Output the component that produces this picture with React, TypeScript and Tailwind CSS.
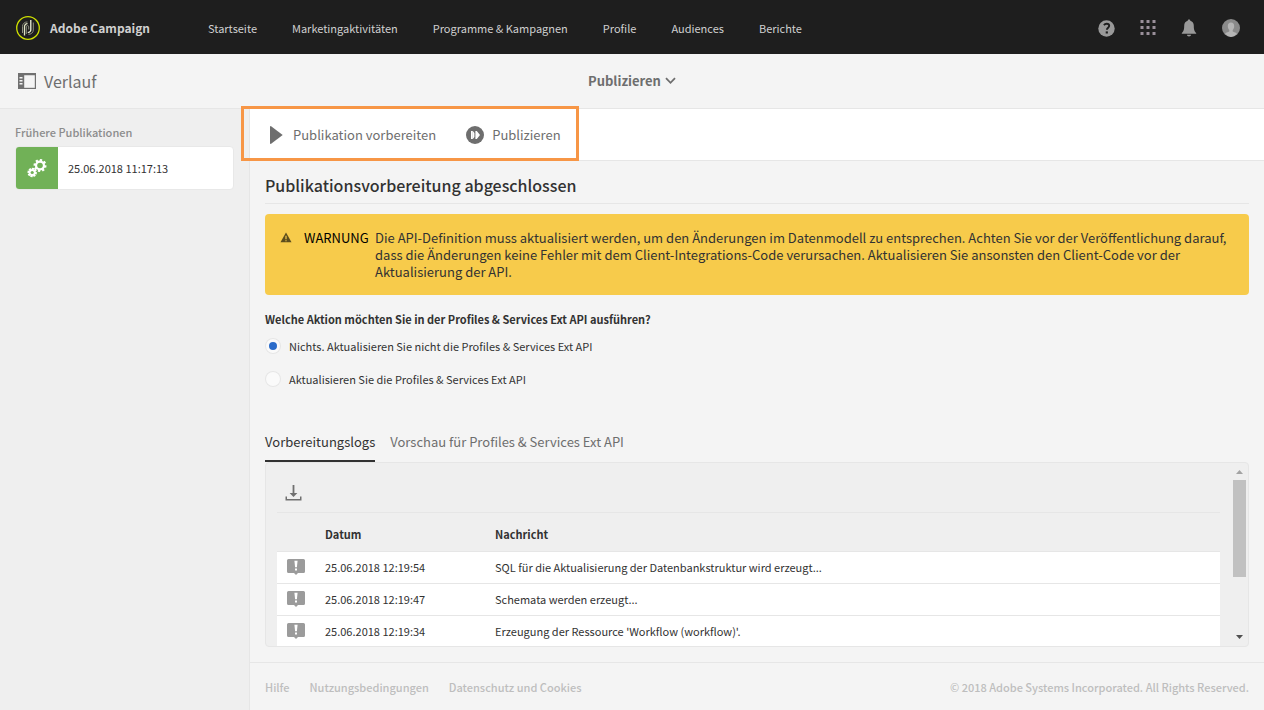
import { useState } from "react";

type LogEntry = { date: string; message: string };

const NAV_ITEMS = [
  "Startseite",
  "Marketingaktivitäten",
  "Programme & Kampagnen",
  "Profile",
  "Audiences",
  "Berichte",
];

const LOGS: LogEntry[] = [
  { date: "25.06.2018 12:19:54", message: "SQL für die Aktualisierung der Datenbankstruktur wird erzeugt..." },
  { date: "25.06.2018 12:19:47", message: "Schemata werden erzeugt..." },
  { date: "25.06.2018 12:19:34", message: "Erzeugung der Ressource 'Workflow (workflow)'." },
];

const ACTIONS = [
  { id: "none", label: "Nichts. Aktualisieren Sie nicht die Profiles & Services Ext API" },
  { id: "update", label: "Aktualisieren Sie die Profiles & Services Ext API" },
];

const TABS = ["Vorbereitungslogs", "Vorschau für Profiles & Services Ext API"];

const FOOTER_LINKS = ["Hilfe", "Nutzungsbedingungen", "Datenschutz und Cookies"];

function Logo() {
  return (
    <svg width="24" height="24" viewBox="0 0 24 24" fill="none">
      <circle cx="12" cy="12" r="11.3" stroke="#cfe000" strokeWidth="1.3" />
      <g strokeWidth="1">
        <path d="M6.5 17V10.5a4.5 4.5 0 0 1 5-4.500" stroke="#8d8f80" />
        <path d="M8.5 19.500V10.500a2.800 2.800 0 0 1 3-2.800" stroke="#dfe3c4" strokeWidth="1.300" />
        <path d="M10.300 18v-7.200a1.200 1.200 0 0 1 2.400 0V13.500" stroke="#8d8f80" />
        <path d="M14.800 4v9.500a2.600 2.600 0 0 1-3 2.800" stroke="#f0f3dc" strokeWidth="1.300" />
        <path d="M17.300 6.500v7.500a4.300 4.300 0 0 1-5 4.200" stroke="#8d8f80" />
      </g>
    </svg>
  );
}

function HelpIcon() {
  return (
    <svg width="17" height="17" viewBox="0 0 17 17">
      <circle cx="8.5" cy="8.5" r="8.2" fill="#999" />
      <path
        d="M5.9 5.1c.7-.9 1.700-1.300 2.800-1.300 1.500 0 2.500.8 2.500 2 0 1.900-2.300 1.900-2.300 4"
        fill="none"
        stroke="#1e1e1e"
        strokeWidth="1.9"
      />
      <rect x="7.7" y="11.4" width="2.2" height="2.1" fill="#1e1e1e" />
    </svg>
  );
}

function AppsIcon() {
  return (
    <svg width="16" height="16" viewBox="0 0 16 16" fill="#9a8f9a">
      {[0, 6, 12].map((y) =>
        [0, 6, 12].map((x) => <rect key={`${x}-${y}`} x={x + 0.5} y={y} width="3" height="3" />),
      )}
    </svg>
  );
}

function BellIcon() {
  return (
    <svg width="16" height="18" viewBox="0 0 16 18" fill="#999">
      <path d="M8 .5c.8 0 1.300.5 1.300 1.200 2.300.6 3.500 2.500 3.500 5 0 4.300.7 5.600 2.400 7.300v.8H.8V14c1.700-1.700 2.400-3 2.400-7.300 0-2.500 1.200-4.400 3.500-5C6.700 1 7.200.5 8 .5z" />
      <path d="M5.9 15.800h4.200c-.2 1-1 1.600-2.100 1.600s-1.900-.6-2.100-1.600z" />
    </svg>
  );
}

function AvatarIcon() {
  return (
    <svg width="18" height="18" viewBox="0 0 18 18">
      <circle cx="9" cy="9" r="9" fill="#8a8a8a" />
      <path
        d="M9 3.500c2 0 3.200 1.400 3.200 3.500 0 1.700-.6 3.200-1.500 4v1.300c0 .6 3.300 1 4.200 2.400A9 9 0 0 1 9 18a9 9 0 0 1-5.900-3.300c.9-1.400 4.200-1.800 4.200-2.400V11c-.9-.8-1.500-2.300-1.500-4 0-2.100 1.200-3.500 3.200-3.500z"
        fill="#b5b5b5"
      />
    </svg>
  );
}

function RailIcon() {
  return (
    <svg width="18" height="16" viewBox="0 0 18 16">
      <rect x=".6" y=".6" width="16.8" height="14.8" fill="none" stroke="#707070" strokeWidth="1.2" />
      <path d="M0 0h18v2.200H0zM0 2h6.200v14H0z" fill="#707070" />
      <path d="M1.5 4h3v1.500h-3zM1.500 7h3v1.500h-3zM1.500 10h3v1.500h-3z" fill="#f4f4f4" />
    </svg>
  );
}

function Gear({ cx, cy, r, hole }: { cx: number; cy: number; r: number; hole: number }) {
  return (
    <g transform={`translate(${cx} ${cy})`} fill="#fff">
      {[0, 45, 90, 135].map((angle) => (
        <rect key={angle} x="-1.2" y={-r} width="2.4" height={r * 2} transform={`rotate(${angle + 10})`} />
      ))}
      <circle r={r - 1.4} />
      <circle r={hole} fill="#71b157" />
    </g>
  );
}

function GearsIcon() {
  return (
    <svg width="20" height="20" viewBox="0 0 20 20">
      <Gear cx={13} cy={7.5} r={6.5} hole={2.8} />
      <Gear cx={5.2} cy={14.5} r={4.7} hole={1.6} />
    </svg>
  );
}

function PlayIcon() {
  return (
    <svg width="13" height="18" viewBox="0 0 13 18" fill="#6e6e6e">
      <path d="M.8 0 12.700 9 .8 18q-.8 0-.8-.8V.8Q0 0 .8 0z" />
    </svg>
  );
}

function PublishIcon() {
  return (
    <svg width="18" height="18" viewBox="0 0 18 18">
      <circle cx="9" cy="9" r="9" fill="#6e6e6e" />
      <path d="M5 5h1.800v8H5zM9.400 5h1.400l3.200 4-3.200 4H9.400z" fill="#fff" />
      <path d="M6.800 5 8.400 7v4l-1.600 2z" fill="#fff" />
    </svg>
  );
}

function ChevronIcon() {
  return (
    <svg width="11" height="8" viewBox="0 0 11 8" fill="none">
      <path d="M1 1.200 5.500 5.800 10 1.200" stroke="#6e6e6e" strokeWidth="1.8" />
    </svg>
  );
}

function WarningIcon() {
  return (
    <svg width="12" height="11" viewBox="0 0 12 11">
      <path d="M6 .5 11.500 10.300H.5z" fill="#5c4d1d" />
      <path d="M5.400 3.800h1.200v3.500H5.400zM5.400 8.200h1.200v1.100H5.400z" fill="#f7cb4b" />
    </svg>
  );
}

function DownloadIcon() {
  return (
    <svg width="17" height="17" viewBox="0 0 17 17" fill="#707070">
      <path d="M7.600 0h1.800v8h3L8.500 12 4.600 8h3z" />
      <path d="M.5 11.500H2V14h13v-2.500h1.500v4H.5z" />
    </svg>
  );
}

function LogIcon() {
  return (
    <svg width="18" height="16" viewBox="0 0 18 16">
      <path d="M1.500 0h15Q18 0 18 1.500v11q0 1.500-1.500 1.500H11l-2 2-2-2H1.500Q0 14 0 12.500v-11Q0 0 1.500 0z" fill="#9b9b9b" />
      <path d="M7.400 1.800h3.200L9.900 8.200H8.100zM8 9.500h2v2H8z" fill="#fff" />
    </svg>
  );
}

function Header() {
  return (
    <header className="flex h-[54px] items-center bg-[#1e1e1e] pt-0.5 pr-6 pl-4 text-[#d0d0d0]">
      <div className="flex w-48 items-center gap-2.5">
        <Logo />
        <span className="text-xs leading-5 font-bold">Adobe Campaign</span>
      </div>
      <nav className="flex flex-1 gap-[35px] text-[11px] leading-5 whitespace-nowrap">
        {NAV_ITEMS.map((item) => (
          <a key={item} href="#">
            {item}
          </a>
        ))}
      </nav>
      <div className="flex items-center gap-[25px]">
        <button type="button" aria-label="Hilfe">
          <HelpIcon />
        </button>
        <button type="button" aria-label="Lösungen">
          <AppsIcon />
        </button>
        <button type="button" aria-label="Benachrichtigungen">
          <BellIcon />
        </button>
        <button type="button" aria-label="Benutzer">
          <AvatarIcon />
        </button>
      </div>
    </header>
  );
}

function TitleBar() {
  return (
    <div className="grid h-[55px] grid-cols-3 items-center border-b border-[#e6e6e6] text-[#6e6e6e]">
      <div className="flex items-center gap-2 pl-[18px]">
        <button type="button" aria-label="Seitenleiste">
          <RailIcon />
        </button>
        <h1 className="text-base leading-5">Verlauf</h1>
      </div>
      <button type="button" className="flex items-center justify-center gap-1 text-[13px] leading-5 font-bold">
        Publizieren
        <ChevronIcon />
      </button>
    </div>
  );
}

function Sidebar() {
  return (
    <aside className="w-[250px] shrink-0 border-r border-[#e6e6e6] bg-[#efefef] px-[15px] pt-[13px]">
      <h2 className="text-[11px] leading-5 font-medium text-[#8c8c8c]">Frühere Publikationen</h2>
      <button
        type="button"
        className="mt-1 flex h-11 w-full items-center overflow-hidden rounded-sm border border-[#e8e8e8] bg-white text-left"
      >
        <span className="flex h-full w-[42px] items-center justify-center bg-[#71b157]">
          <GearsIcon />
        </span>
        <span className="pl-2.5 text-[11px] leading-5">25.06.2018 11:17:13</span>
      </button>
    </aside>
  );
}

function Toolbar() {
  return (
    <div className="relative flex h-[52px] items-center gap-[30px] border-b border-[#e6e6e6] bg-white pl-5 text-[13px] leading-5 text-[#6e6e6e]">
      <button type="button" className="flex items-center gap-2.5">
        <PlayIcon />
        Publikation vorbereiten
      </button>
      <button type="button" className="flex items-center gap-2">
        <PublishIcon />
        Publizieren
      </button>
      <div className="pointer-events-none absolute -top-[3px] -left-[9px] h-[55px] w-[338px] border-3 border-[#f79646]" />
    </div>
  );
}

function LogPanel() {
  return (
    <div className="flex h-[185px] overflow-hidden rounded-sm border border-[#e6e6e6] bg-[#efefef]">
      <div className="flex-1 pl-[11px]">
        <div className="flex h-[50px] items-center border-b border-[#e6e6e6] pt-3 pl-2">
          <button type="button" aria-label="Herunterladen">
            <DownloadIcon />
          </button>
        </div>
        <table className="w-full text-left text-[11px] leading-5">
          <thead>
            <tr className="h-[38px]">
              <th className="w-12" />
              <th className="w-[170px] pt-1 font-bold">Datum</th>
              <th className="pt-1 font-bold">Nachricht</th>
            </tr>
          </thead>
          <tbody className="bg-white">
            {LOGS.map((log) => (
              <tr key={log.date} className="h-8 border-t border-[#e6e6e6]">
                <td className="pl-2.5">
                  <LogIcon />
                </td>
                <td>{log.date}</td>
                <td>{log.message}</td>
              </tr>
            ))}
          </tbody>
        </table>
      </div>
      <div className="ml-[13px] flex w-[13px] flex-col items-center py-[7px]">
        <svg width="7" height="4" viewBox="0 0 7 4">
          <path d="M3.500 0 7 4H0z" fill="#a3a3a3" />
        </svg>
        <div className="mt-1.5 h-[97px] w-full bg-[#c1c1c1]" />
        <svg className="mt-auto" width="7" height="4" viewBox="0 0 7 4">
          <path d="M0 0h7L3.500 4z" fill="#505050" />
        </svg>
      </div>
      <div className="w-0.5" />
    </div>
  );
}

function Footer() {
  return (
    <footer className="mt-[15px] flex h-12 items-center justify-between border-t border-[#e6e6e6] px-[15px] text-[11px] leading-5 font-medium text-[#bebebe]">
      <div className="flex gap-5">
        {FOOTER_LINKS.map((link) => (
          <a key={link} href="#">
            {link}
          </a>
        ))}
      </div>
      <p>© 2018 Adobe Systems Incorporated. All Rights Reserved.</p>
    </footer>
  );
}

export default function App() {
  const [action, setAction] = useState("none");
  const [activeTab, setActiveTab] = useState(TABS[0]);

  return (
    <div className="flex min-h-screen flex-col bg-[#f4f4f4] font-['Noto_Sans_CJK_JP',sans-serif] text-[#323232]">
      <Header />
      <TitleBar />
      <div className="flex flex-1">
        <Sidebar />
        <div className="flex min-w-0 flex-1 flex-col">
          <Toolbar />
          <main className="flex-1 px-[15px]">
            <h2 className="border-b border-[#e6e6e6] pt-3.5 pb-2 text-base leading-5 font-medium">
              Publikationsvorbereitung abgeschlossen
            </h2>
            <div
              role="alert"
              className="mt-2.5 flex rounded-sm bg-[#f7cb4b] p-[15px] text-[13px] leading-[17px]"
            >
              <span className="w-6 shrink-0 pt-[3px]">
                <WarningIcon />
              </span>
              <span className="w-[71px] shrink-0 text-black">WARNUNG</span>
              <p>
                Die API-Definition muss aktualisiert werden, um den Änderungen im Datenmodell zu entsprechen. Achten
                Sie vor der Veröffentlichung darauf, dass die Änderungen keine Fehler mit dem Client-Integrations-Code
                verursachen. Aktualisieren Sie ansonsten den Client-Code vor der Aktualisierung der API.
              </p>
            </div>

            <fieldset className="mt-3.5 text-[11px] leading-5">
              <legend className="font-bold">
                Welche Aktion möchten Sie in der Profiles & Services Ext API ausführen?
              </legend>
              <div className="mt-[7px] flex flex-col gap-[13px]">
                {ACTIONS.map(({ id, label }) => (
                  <label key={id} className="flex items-center gap-2">
                    <input
                      type="radio"
                      name="action"
                      value={id}
                      checked={action === id}
                      onChange={() => setAction(id)}
                      className="mx-px size-3.5 appearance-none rounded-full bg-[#fafafa] ring-1 ring-[#e6e6e6] checked:border-3 checked:border-[#fafafa] checked:bg-[#2b6bc9]"
                    />
                    {label}
                  </label>
                ))}
              </div>
            </fieldset>

            <div role="tablist" className="mt-[43px] flex gap-[15px] text-[13px] leading-5">
              {TABS.map((tab) => (
                <button
                  key={tab}
                  type="button"
                  role="tab"
                  aria-selected={tab === activeTab}
                  onClick={() => setActiveTab(tab)}
                  className={`border-b-2 pb-2 ${
                    tab === activeTab ? "border-[#323232]" : "border-transparent text-[#6e6e6e]"
                  }`}
                >
                  {tab}
                </button>
              ))}
            </div>
            <LogPanel />
          </main>
          <Footer />
        </div>
      </div>
    </div>
  );
}
